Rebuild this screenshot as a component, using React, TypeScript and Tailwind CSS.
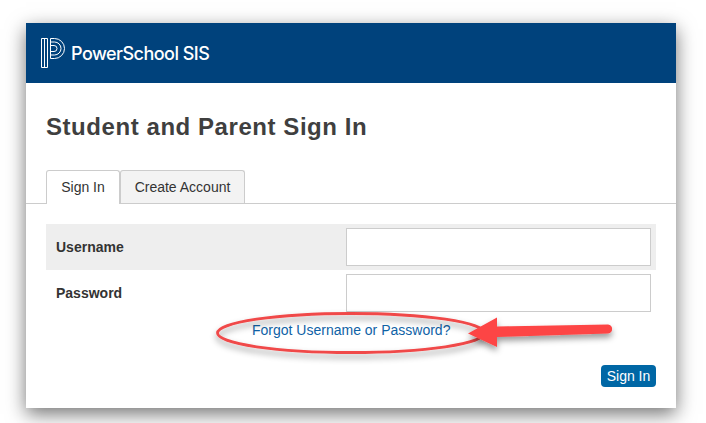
import React from "react";

function Logo() {
  return (
    <svg width="24" height="30" viewBox="0 0 24 30" fill="none" stroke="white" strokeWidth="1" className="shrink-0">
      <path d="M0.500 0.500h6v29h-6z" />
      <path d="M3.500 0.500v29" />
      <path d="M9.500 0.500h4a10 10 0 0 1 0 20h-4z" />
      <path d="M9.500 4h4a6.500 6.500 0 0 1 0 13h-4" />
      <path d="M9.500 7.500h3.500a3 3 0 0 1 0 6h-3.500" />
    </svg>
  );
}

function Annotation() {
  return (
    <svg width="706" height="423" viewBox="0 0 706 423" fill="none" className="absolute inset-0 pointer-events-none">
      <defs>
        <filter id="sh" x="-20%" y="-50%" width="140%" height="220%">
          <feDropShadow dx="0" dy="4" stdDeviation="3" floodColor="#000" floodOpacity="0.4" />
        </filter>
      </defs>
      <g filter="url(#sh)">
        <ellipse cx="351" cy="333" rx="133.500" ry="19.500" stroke="#f04848" strokeWidth="2.800" />
      </g>
      <g filter="url(#sh)">
        <path
          d="M468 333.500L497 317.500V326.500L608 324.500C613.500 324.500 613.500 333.500 608 333.500L497 337V347Z"
          fill="#fd4444"
        />
      </g>
    </svg>
  );
}

export default function App() {
  return (
    <div className="relative w-[706px] h-[423px] overflow-hidden bg-white font-['Liberation_Sans',Arial,sans-serif] pt-[23px] pl-[26px]">
      <div className="w-[650px] h-[385px] bg-white flex flex-col shadow-[0_6px_18px_rgba(0,0,0,0.55)]">
        <header className="h-[60px] bg-[#00427c] flex items-center pl-[15px] gap-[6px]">
          <Logo />
          <span className="text-white text-[18px] font-['Inter',sans-serif] font-medium tracking-[-0.53px]">PowerSchool SIS</span>
        </header>

        <h1 className="mt-[30px] ml-5 text-[24px] leading-[28px] font-bold text-[#3f3f3f] tracking-[0.56px]">
          Student and Parent Sign In
        </h1>

        <div className="mt-[29px] h-[33px] flex pl-5 border-b border-[#cccccc] box-content">
          <div className="w-[74px] h-[34px] bg-white border border-b-0 border-[#cccccc] rounded-t-[3px] text-[14px] text-[#333333] flex items-center justify-center">
            Sign In
          </div>
          <div className="w-[125px] h-[33px] bg-[#f3f3f3] border border-b-0 border-[#cccccc] rounded-t-[3px] text-[14px] text-[#333333] flex items-center justify-center">
            Create Account
          </div>
        </div>

        <div className="mt-5 mx-5 flex flex-col">
          <div className="h-[46px] bg-[#eeeeee] flex items-center justify-between pl-[10px] pr-[5px]">
            <span className="text-[14px] font-bold text-[#333333]">Username</span>
            <div className="w-[305px] h-[38px] bg-white border border-[#cccccc]" />
          </div>
          <div className="h-[46px] flex items-center justify-between pl-[10px] pr-[5px]">
            <span className="text-[14px] font-bold text-[#333333]">Password</span>
            <div className="w-[305px] h-[38px] bg-white border border-[#cccccc]" />
          </div>
        </div>

        <a className="ml-[226px] mt-[6px] text-[14px] leading-[16px] text-[#0f62a6]">Forgot Username or Password?</a>

        <div className="mt-[27px] mr-5 flex justify-end">
          <button className="w-[55px] h-[22px] bg-[#0067a5] text-white text-[14px] rounded-[4px] flex items-center justify-center">
            Sign In
          </button>
        </div>
      </div>
      <Annotation />
    </div>
  );
}
